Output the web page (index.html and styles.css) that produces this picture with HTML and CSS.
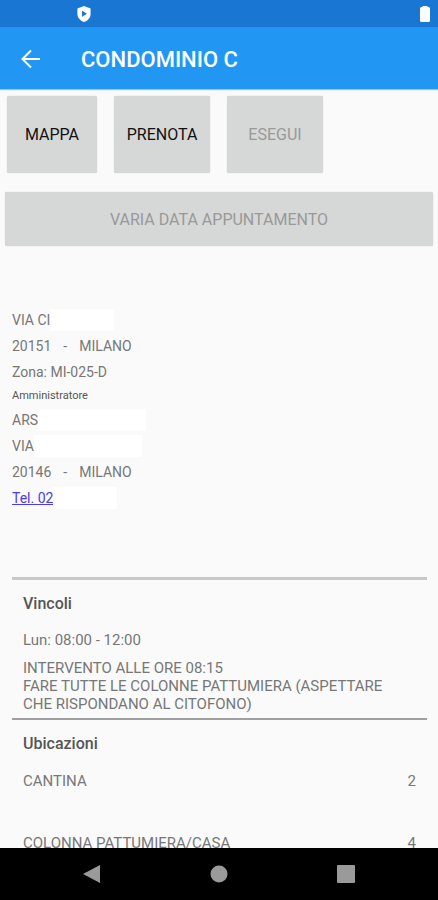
FILE: index.html
```html
<!DOCTYPE html>
<html lang="it">
<head>
<meta charset="utf-8">
<meta name="viewport" content="width=device-width, initial-scale=1">
<title>CONDOMINIO C</title>
<link rel="stylesheet" href="styles.css">
</head>
<body>
<div class="status">
  <svg class="shield" viewBox="0 0 14 16" aria-hidden="true"><path fill="#fff" d="M7 0 13.6 2.4V8c0 3.6-2.6 6.600-6.600 8C3 14.600.4 11.600.4 8V2.400z"/><path fill="#1976d2" d="M5 4.800v6L10 7.800z"/></svg>
  <svg class="battery" viewBox="0 0 10 16" aria-hidden="true"><path fill="#fff" d="M2.500 0h5v1H8.500q1.500 0 1.500 1.500v12q0 1.500-1.500 1.500h-7Q0 16 0 14.500v-12Q0 1 1.500 1h1z"/></svg>
</div>
<header class="bar">
  <button class="back" type="button" aria-label="Indietro"><svg viewBox="0 0 20 20" aria-hidden="true"><path fill="none" stroke="#fff" stroke-width="2" d="M19 10H2M10 1.500 1.500 10l8.500 8.500"/></svg></button>
  <h1>CONDOMINIO C</h1>
</header>
<main>
  <div class="actions">
    <button class="btn" type="button">MAPPA</button>
    <button class="btn" type="button">PRENOTA</button>
    <button class="btn" type="button" disabled>ESEGUI</button>
  </div>
  <button class="btn wide" type="button" disabled>VARIA DATA APPUNTAMENTO</button>
  <address class="details">
    <p>VIA CI<span class="mask short"></span></p>
    <p class="town"><span>20151</span><span>-</span><span>MILANO</span></p>
    <p>Zona: MI-025-D</p>
    <h2>Amministratore</h2>
    <p>ARS<span class="mask long"></span></p>
    <p>VIA<span class="mask long"></span></p>
    <p class="town"><span>20146</span><span>-</span><span>MILANO</span></p>
    <p><a href="tel:02">Tel. 02</a><span class="mask short"></span></p>
  </address>
  <section class="panel first">
    <h3>Vincoli</h3>
    <p class="row">Lun: 08:00 - 12:00</p>
    <p class="note">INTERVENTO ALLE ORE 08:15<br>FARE TUTTE LE COLONNE PATTUMIERA (ASPETTARE CHE RISPONDANO AL CITOFONO)</p>
  </section>
  <section class="panel">
    <h3>Ubicazioni</h3>
    <ul>
      <li><span>CANTINA</span><span>2</span></li>
      <li><span>COLONNA PATTUMIERA/CASA</span><span>4</span></li>
    </ul>
  </section>
</main>
<nav class="system">
  <button type="button" aria-label="Indietro"><svg viewBox="0 0 18 18"><path fill="#9a9a9a" d="M17 0v18L0 9z"/></svg></button>
  <button type="button" aria-label="Home"><svg viewBox="0 0 18 18"><circle cx="9" cy="9" r="8.500" fill="#9a9a9a"/></svg></button>
  <button type="button" aria-label="Recenti"><svg viewBox="0 0 18 18"><rect width="18" height="18" rx="1" fill="#9a9a9a"/></svg></button>
</nav>
</body>
</html>
```
FILE: styles.css
```css
* { box-sizing: border-box; }
body {
  margin: 0;
  height: 100vh;
  display: flex;
  flex-direction: column;
  overflow: hidden;
  background: #fafafa;
  color: #777;
  font: 400 15px/18px Roboto, sans-serif;
}
h1, h2, h3, p, ul { margin: 0; padding: 0; }
button { border: 0; padding: 0; font-family: inherit; }
.status {
  flex: none;
  height: 27px;
  padding: 0 8px 0 77px;
  display: flex;
  align-items: center;
  justify-content: space-between;
  background: #1976d2;
}
.shield { width: 14px; height: 16px; }
.battery { width: 10px; height: 16px; }
.bar {
  flex: none;
  height: 62px;
  padding: 2px 21px 0;
  display: flex;
  align-items: center;
  gap: 40px;
  background: #2196f3;
  color: #fff;
  box-shadow: 0 1px 1px #2196f380;
}
.back { width: 20px; height: 20px; background: none; }
.back svg { display: block; width: 20px; height: 20px; }
h1 { font-size: 22px; line-height: 28px; font-weight: 500; padding-top: 2px; }
main { flex: 1; min-height: 0; overflow: hidden; padding-top: 7px; }
.actions { display: flex; gap: 17px; padding: 0 7px; }
.btn {
  height: 77px;
  min-width: 90px;
  border-radius: 2px;
  background: #d6d7d7;
  color: #111;
  font-size: 16px;
  font-weight: 400;
  box-shadow: 0 0 1px #bbb;
}
.actions .btn:nth-child(n+2) { min-width: 96px; }
.btn:disabled { color: #999; }
.wide { display: block; width: calc(100% - 10px); height: 54px; margin: 19px 5px 0; }
.details { padding: 61px 12px 0; font-size: 14px; font-style: normal; }
.details p { display: flex; align-items: center; height: 26px; }
.details h2 { font-size: 11px; line-height: 22px; font-weight: 400; color: #555; }
.town { gap: 12px; }
.details a { color: #4a3cf0; }
.mask { height: 22px; background: #fff; }
.short { width: 64px; }
.long { width: 108px; }
.panel { margin: 0 11px 0 12px; padding: 12px 11px 5px; border-top: 2px solid #a0a0a0; }
.first { margin-top: 66px; border-top: 3px solid #c8c8c8; }
h3 { font-size: 16px; line-height: 24px; font-weight: 500; color: #555; }
.row { padding: 15px 0 10px; }
.note { padding-right: 16px; }
ul { list-style: none; }
li { display: flex; justify-content: space-between; height: 62px; padding-top: 16px; }
.system {
  flex: none;
  height: 52px;
  padding: 0 82px;
  display: flex;
  align-items: center;
  justify-content: space-between;
  background: #000;
}
.system button { width: 20px; height: 20px; background: none; }
.system svg { display: block; width: 18px; height: 18px; margin: auto; }
```
